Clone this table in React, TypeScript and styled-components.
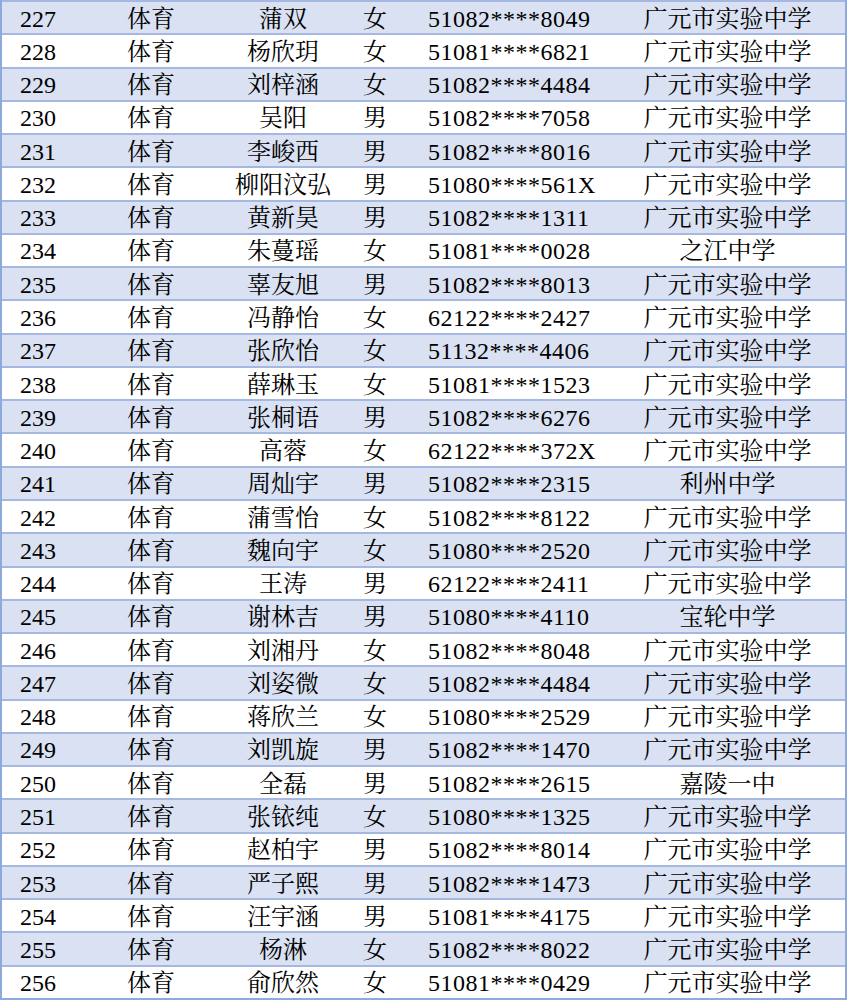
import React from "react";
import styled, { createGlobalStyle } from "styled-components";

const Global = createGlobalStyle`
  html, body { margin: 0; padding: 0; background: #ffffff; }
  body { width: 847px; height: 1000px; overflow: hidden; }
`;

type Row = [number, string, string, string, string];

const rows: Row[] = [
  [227, "蒲双", "女", "51082****8049", "广元市实验中学"],
  [228, "杨欣玥", "女", "51081****6821", "广元市实验中学"],
  [229, "刘梓涵", "女", "51082****4484", "广元市实验中学"],
  [230, "吴阳", "男", "51082****7058", "广元市实验中学"],
  [231, "李峻西", "男", "51082****8016", "广元市实验中学"],
  [232, "柳阳汶弘", "男", "51080****561X", "广元市实验中学"],
  [233, "黄新昊", "男", "51082****1311", "广元市实验中学"],
  [234, "朱蔓瑶", "女", "51081****0028", "之江中学"],
  [235, "辜友旭", "男", "51082****8013", "广元市实验中学"],
  [236, "冯静怡", "女", "62122****2427", "广元市实验中学"],
  [237, "张欣怡", "女", "51132****4406", "广元市实验中学"],
  [238, "薛琳玉", "女", "51081****1523", "广元市实验中学"],
  [239, "张桐语", "男", "51082****6276", "广元市实验中学"],
  [240, "高蓉", "女", "62122****372X", "广元市实验中学"],
  [241, "周灿宇", "男", "51082****2315", "利州中学"],
  [242, "蒲雪怡", "女", "51082****8122", "广元市实验中学"],
  [243, "魏向宇", "女", "51080****2520", "广元市实验中学"],
  [244, "王涛", "男", "62122****2411", "广元市实验中学"],
  [245, "谢林吉", "男", "51080****4110", "宝轮中学"],
  [246, "刘湘丹", "女", "51082****8048", "广元市实验中学"],
  [247, "刘姿微", "女", "51082****4484", "广元市实验中学"],
  [248, "蒋欣兰", "女", "51080****2529", "广元市实验中学"],
  [249, "刘凯旋", "男", "51082****1470", "广元市实验中学"],
  [250, "全磊", "男", "51082****2615", "嘉陵一中"],
  [251, "张铱纯", "女", "51080****1325", "广元市实验中学"],
  [252, "赵柏宇", "男", "51082****8014", "广元市实验中学"],
  [253, "严子熙", "男", "51082****1473", "广元市实验中学"],
  [254, "汪宇涵", "男", "51081****4175", "广元市实验中学"],
  [255, "杨淋", "女", "51082****8022", "广元市实验中学"],
  [256, "俞欣然", "女", "51081****0429", "广元市实验中学"],
];

const Sheet = styled.div`
  box-sizing: border-box;
  width: 847px;
  height: 1000px;
  border-left: 2px solid #8ea9db;
  border-right: 2px solid #8ea9db;
  border-bottom: 2px solid #8ea9db;
  display: grid;
  grid-template-rows: repeat(30, 1fr);
  font-family: "Liberation Serif", "Noto Serif CJK SC", "Noto Sans CJK SC", serif;
  font-size: 24px;
  color: #000;
`;

const RowLine = styled.div<{ $shaded: boolean }>`
  box-sizing: border-box;
  display: grid;
  grid-template-columns: 74px 150px 114px 70px 200px 1fr;
  align-items: center;
  border-top: 2px solid #a4b8e2;
  background: ${(p) => (p.$shaded ? "#d9e1f2" : "#ffffff")};
  min-height: 0;
  line-height: 1;
`;

const Cell = styled.div<{ $align?: "left" | "center" }>`
  text-align: ${(p) => p.$align ?? "center"};
  white-space: nowrap;
  padding-top: 2px;
  padding-left: ${(p) => (p.$align === "left" ? "18px" : "0")};
`;

const Id = styled(Cell)`
  text-align: left;
  padding-left: 18px;
  letter-spacing: 0.5px;
`;

export default function App() {
  return (
    <>
      <Global />
      <Sheet>
        {rows.map(([n, name, sex, id, school], i) => (
          <RowLine key={n} $shaded={i % 2 === 0}>
            <Cell $align="left">{n}</Cell>
            <Cell>体育</Cell>
            <Cell>{name}</Cell>
            <Cell>{sex}</Cell>
            <Id>{id}</Id>
            <Cell>{school}</Cell>
          </RowLine>
        ))}
      </Sheet>
    </>
  );
}
